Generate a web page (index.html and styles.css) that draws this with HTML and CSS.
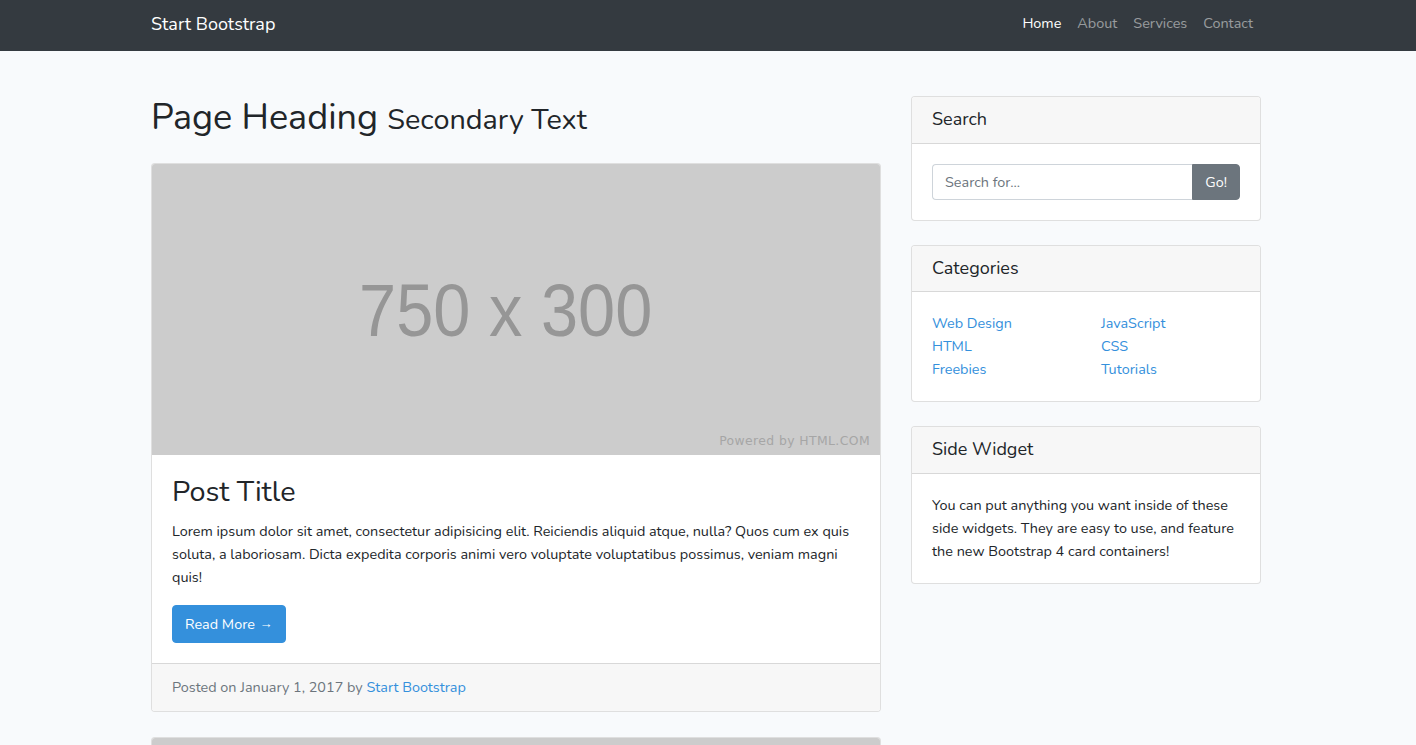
FILE: index.html
```html
<!DOCTYPE html>
<html lang="en">
<head>
<meta charset="utf-8">
<title>Blog Home - Start Bootstrap</title>
<link rel="stylesheet" href="styles.css">
</head>
<body>
<nav class="navbar">
  <div class="container nav-inner">
    <a class="brand" href="#">Start Bootstrap</a>
    <ul class="nav-links">
      <li><a class="nav-link active" href="#">Home</a></li>
      <li><a class="nav-link" href="#">About</a></li>
      <li><a class="nav-link" href="#">Services</a></li>
      <li><a class="nav-link" href="#">Contact</a></li>
    </ul>
  </div>
</nav>

<div class="container layout">
  <main class="main-col">
    <h1 class="page-heading">Page Heading <small>Secondary Text</small></h1>

    <article class="card post">
      <div class="placeholder">
        <span class="ph-size">750 x 300</span>
        <span class="ph-credit">Powered by HTML.COM</span>
      </div>
      <div class="card-body">
        <h2 class="post-title">Post Title</h2>
        <p class="post-text">Lorem ipsum dolor sit amet, consectetur adipisicing elit. Reiciendis aliquid atque, nulla? Quos cum ex quis soluta, a laboriosam. Dicta expedita corporis animi vero voluptate voluptatibus possimus, veniam magni quis!</p>
        <a href="#" class="btn btn-primary">Read More <span class="arrow">&rarr;</span></a>
      </div>
      <div class="card-footer">Posted on January 1, 2017 by <a href="#">Start Bootstrap</a></div>
    </article>

    <article class="card post">
      <div class="placeholder"></div>
    </article>
  </main>

  <aside class="side-col">
    <section class="card widget">
      <h5 class="card-header">Search</h5>
      <div class="card-body">
        <div class="input-group">
          <input class="form-control" type="text" placeholder="Search for...">
          <button class="btn btn-secondary" type="button">Go!</button>
        </div>
      </div>
    </section>

    <section class="card widget">
      <h5 class="card-header">Categories</h5>
      <div class="card-body">
        <div class="cat-grid">
          <ul class="cat-list">
            <li><a href="#">Web Design</a></li>
            <li><a href="#">HTML</a></li>
            <li><a href="#">Freebies</a></li>
          </ul>
          <ul class="cat-list">
            <li><a href="#">JavaScript</a></li>
            <li><a href="#">CSS</a></li>
            <li><a href="#">Tutorials</a></li>
          </ul>
        </div>
      </div>
    </section>

    <section class="card widget">
      <h5 class="card-header">Side Widget</h5>
      <div class="card-body">
        You can put anything you want inside of these side widgets. They are easy to use, and feature the new Bootstrap 4 card containers!
      </div>
    </section>
  </aside>
</div>
</body>
</html>
```

FILE: styles.css
```css
* { box-sizing: border-box; }

html, body {
  margin: 0;
  padding: 0;
}

body {
  font-family: "Nunito", "Lato", "Noto Sans", sans-serif;
  font-size: 14.4px;
  line-height: 1.6;
  color: #212529;
  background: #f8fafc;
  overflow: hidden;
}

a { color: #3490dc; text-decoration: none; }

.container {
  width: 1110px;
  margin-left: 151px;
}

/* navbar */
.navbar {
  background: #343a40;
  height: 51px;
}
.nav-inner {
  height: 51px;
  padding-bottom: 3px;
  display: flex;
  align-items: center;
  justify-content: space-between;
}
.brand {
  color: #fff;
  font-size: 18px;
  line-height: 27px;
}
.nav-links {
  list-style: none;
  margin: 0;
  padding: 0 0 2px;
  display: flex;
}
.nav-link {
  display: block;
  padding: 0 8px;
  color: rgba(255,255,255,.5);
  line-height: 23px;
}
.nav-link.active { color: #fff; }

/* layout */
.layout {
  display: flex;
  gap: 30px;
  padding-top: 45px;
  align-items: flex-start;
}
.main-col { width: 730px; flex: none; }
.side-col { width: 350px; flex: none; display: flex; flex-direction: column; gap: 24px; }

.page-heading {
  font-size: 36px;
  font-weight: 400;
  line-height: 43px;
  margin: 0 0 22px;
}
.page-heading small {
  font-size: 28.8px;
}

/* cards */
.card {
  background: #fff;
  border: 1px solid rgba(0,0,0,.125);
  border-radius: 4px;
  overflow: hidden;
}
.post { margin-bottom: 25px; }

.placeholder {
  position: relative;
  height: 291px;
  background: #cccccc;
  display: flex;
  align-items: center;
  justify-content: center;
}
.ph-size {
  display: inline-block;
  font-family: "Liberation Sans", Arial, sans-serif;
  font-size: 75px;
  color: #969696;
  line-height: 1;
  margin-top: 2px;
  transform: translateX(-10px) scaleX(0.89);
}
.ph-credit {
  position: absolute;
  right: 10px;
  bottom: 4px;
  font-family: "DejaVu Sans", sans-serif;
  font-size: 12.4px;
  letter-spacing: 0.4px;
  color: #a6a6a6;
}

.card-body { padding: 20px; }

.post-title {
  font-size: 28.8px;
  font-weight: 400;
  line-height: 34.6px;
  margin: 0 0 10px;
}
.post-text { margin: 0 0 16px; }

.btn {
  display: inline-block;
  font-family: inherit;
  font-size: 14.4px;
  line-height: 23px;
  padding: 6px 12px;
  border: 1px solid transparent;
  border-radius: 4px;
  cursor: pointer;
}
.btn-primary { background: #3490dc; border-color: #3490dc; color: #fff; padding-top: 7px; }
.btn-secondary { background: #6c757d; border-color: #6c757d; color: #fff; border-radius: 0 4px 4px 0; }
.arrow {
  font-family: "Liberation Sans", Arial, sans-serif;
  font-size: 13px;
  margin-left: 1px;
  position: relative;
  top: -1px;
}

.card-footer {
  background: #f7f7f7;
  border-top: 1px solid rgba(0,0,0,.125);
  padding: 12px 20px;
  color: #6c757d;
  line-height: 23px;
}

.card-header {
  margin: 0;
  font-size: 18px;
  font-weight: 400;
  line-height: 21.6px;
  padding: 12px 20px;
  background: #f7f7f7;
  border-bottom: 1px solid rgba(0,0,0,.125);
}

.input-group { display: flex; }
.form-control {
  flex: 1;
  min-width: 0;
  height: 36px;
  font-family: inherit;
  font-size: 14.4px;
  padding: 6px 12px;
  border: 1px solid #ced4da;
  border-right: none;
  border-radius: 4px 0 0 4px;
  background: #fff;
  color: #495057;
}
.form-control::placeholder { color: #6c757d; }
.input-group .btn { height: 36px; padding: 6px 12px; }

.cat-grid { display: grid; grid-template-columns: 169px 1fr; }
.cat-list { list-style: none; margin: 0; padding: 0; line-height: 23px; }
```
